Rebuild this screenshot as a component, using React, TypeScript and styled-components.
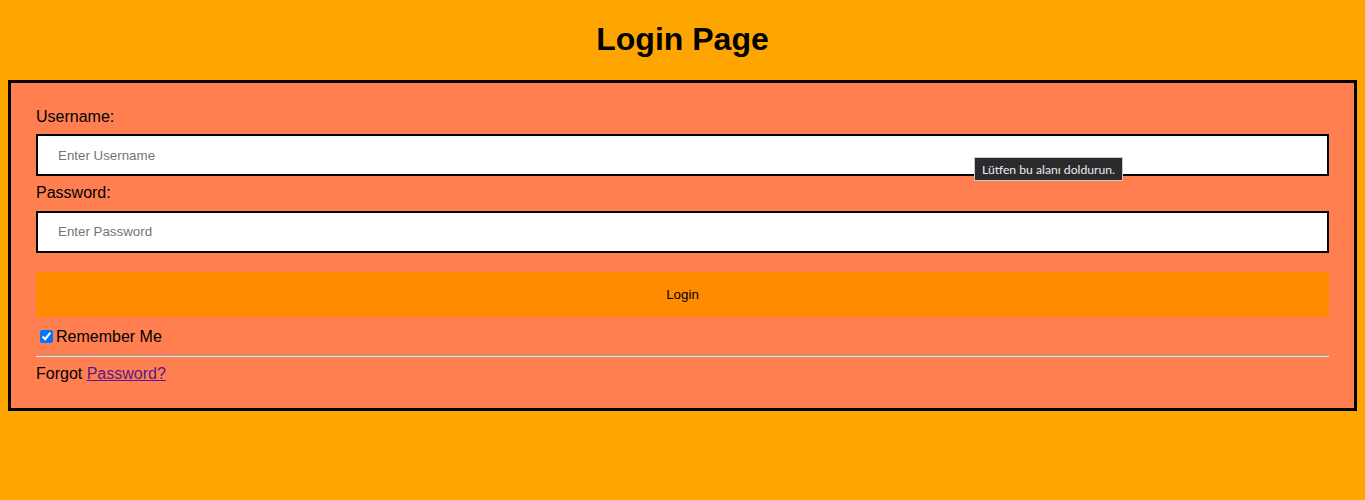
import React from "react";
import styled, { createGlobalStyle } from "styled-components";

const GlobalStyle = createGlobalStyle`
  body {
    margin: 0 8px 8px;
    background: #ffa500;
    font-family: "Liberation Sans", Arial, sans-serif;
  }
`;

const Title = styled.h1`
  text-align: center;
  font-size: 32px;
  font-weight: bold;
  margin: 21.44px 0;
  line-height: 37px;
  color: #000;
`;

const Card = styled.form`
  border: 3px solid #000;
  background: #ff7f50;
  padding: 25px;
  font-size: 16px;
  color: #000;
`;

const Label = styled.label`
  display: block;
  line-height: 18.4px;
  height: 18.4px;
`;

const FieldWrap = styled.div`
  position: relative;
  margin: 8px 0;
`;

const Input = styled.input`
  display: block;
  box-sizing: border-box;
  width: 100%;
  height: 42px;
  padding: 12px 20px;
  border: 2px solid #000;
  background: #fff;
  font-family: "Liberation Sans", Arial, sans-serif;
  font-size: 13.33px;
  outline: none;
  &::placeholder {
    color: #757575;
  }
`;

const Tooltip = styled.div`
  position: absolute;
  left: 938px;
  top: 23px;
  box-sizing: border-box;
  height: 24px;
  padding: 0 7px;
  display: flex;
  align-items: center;
  background: #2b2b2e;
  border: 1px solid #c9c9c9;
  color: #ececec;
  font-family: Lato, "Open Sans", sans-serif;
  font-size: 12.2px;
  white-space: nowrap;
`;

const Button = styled.button`
  display: block;
  width: 100%;
  height: 45px;
  margin: 19px 0 10px;
  border: none;
  background: #ff8c00;
  color: #000;
  font-family: "Liberation Sans", Arial, sans-serif;
  font-size: 13.33px;
  cursor: pointer;
`;

const CheckRow = styled.label`
  display: flex;
  align-items: center;
  height: 20px;
  line-height: 18px;
`;

const Check = styled.input`
  width: 13px;
  height: 13px;
  margin: 3px 3px 3px 4px;
  accent-color: #0075ff;
`;

const Divider = styled.hr`
  margin: 8px 0;
  border: none;
  border-top: 1px solid #9e9e9e;
  border-bottom: 1px solid #e6e6e6;
  height: 0;
`;

const Forgot = styled.div`
  line-height: 18.4px;
`;

const Link = styled.a`
  color: #551a8b;
  text-decoration: underline;
`;

export default function App() {
  return (
    <>
      <GlobalStyle />
      <Title>Login Page</Title>
      <Card onSubmit={(e) => e.preventDefault()}>
        <Label>Username:</Label>
        <FieldWrap>
          <Input type="text" placeholder="Enter Username" />
          <Tooltip>Lütfen bu alanı doldurun.</Tooltip>
        </FieldWrap>
        <Label>Password:</Label>
        <FieldWrap>
          <Input type="password" placeholder="Enter Password" />
        </FieldWrap>
        <Button type="submit">Login</Button>
        <CheckRow>
          <Check type="checkbox" defaultChecked />
          Remember Me
        </CheckRow>
        <Divider />
        <Forgot>
          Forgot <Link href="#">Password?</Link>
        </Forgot>
      </Card>
    </>
  );
}
